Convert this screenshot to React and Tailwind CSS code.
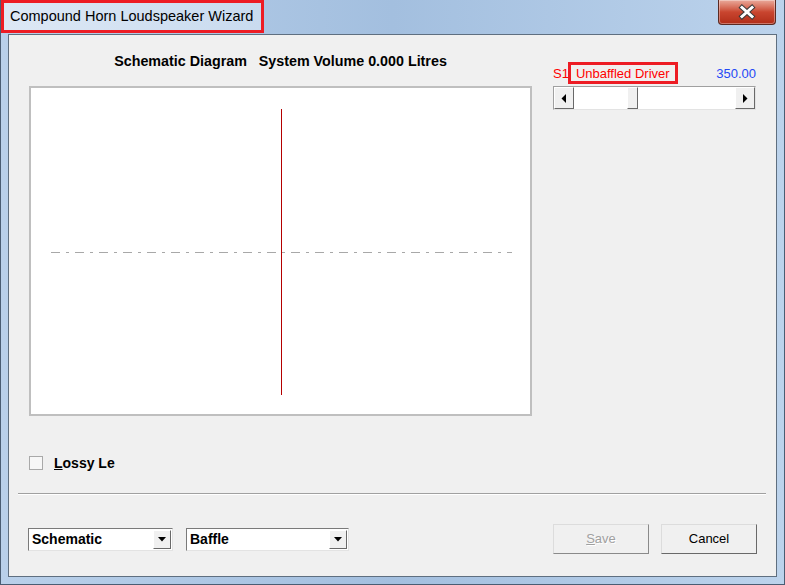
import React from "react"

function CloseButton() {
  return (
    <div className="mr-[8px] flex h-[25px] w-[58px] items-center justify-center rounded-b-[4px] border border-t-0 border-[#5b2a22] bg-gradient-to-b from-[#e9a99b] via-[#c9452f] to-[#b12d18] shadow-[inset_0_0_0_1px_rgba(255,255,255,0.35)]">
      <svg width="22" height="16" viewBox="0 0 22 16">
        <path d="M6 3.5 L16 12.5 M16 3.5 L6 12.5" stroke="#3b3b3b" strokeWidth="5" strokeLinecap="square" />
        <path d="M6 3.5 L16 12.5 M16 3.5 L6 12.5" stroke="#ffffff" strokeWidth="3" strokeLinecap="square" />
      </svg>
    </div>
  )
}

function Diagram() {
  return (
    <svg width="499" height="326" className="block">
      <line x1="20" y1="164.5" x2="481" y2="164.5" stroke="#a8a8a8" strokeWidth="1" strokeDasharray="9 6 3 6" />
      <line x1="250.5" y1="21" x2="250.5" y2="307" stroke="#b40000" strokeWidth="1" />
    </svg>
  )
}

function ScrollArrow({ dir }) {
  return (
    <div className="flex h-full w-[20px] items-center justify-center border border-white border-b-[#696969] border-r-[#696969] bg-[#f0f0f0]">
      <svg width="6" height="9" viewBox="0 0 6 9">
        {dir === "left" ? <path d="M5 0 L5 9 L0.5 4.5 Z" fill="#000" /> : <path d="M1 0 L1 9 L5.5 4.5 Z" fill="#000" />}
      </svg>
    </div>
  )
}

function Combo({ label, width }) {
  return (
    <div className={`flex h-[23px] ${width} items-center border border-[#7a7a7a] border-b-[#e3e3e3] border-r-[#e3e3e3] bg-white p-[1px]`}>
      <span className="flex-1 pl-[2px] text-[14px] font-bold leading-none text-black">{label}</span>
      <div className="flex h-[19px] w-[18px] items-center justify-center border border-white border-b-[#696969] border-r-[#696969] bg-[#f0f0f0]">
        <svg width="8" height="5" viewBox="0 0 8 5">
          <path d="M0 0 L8 0 L4 4.5 Z" fill="#000" />
        </svg>
      </div>
    </div>
  )
}

export default function App() {
  return (
    <div
      className="flex h-[585px] w-[785px] flex-col overflow-hidden border border-t-0 border-[#4a5d73] bg-gradient-to-r from-[#b9d0ea] via-[#a3bfdf] to-[#bcd3ec]"
      style={{ fontFamily: '"Liberation Sans", Arial, sans-serif' }}
    >
      {/* title bar */}
      <div className="flex h-[34px] shrink-0 items-start">
        <div className="flex h-[33px] w-[263px] items-center border-[3px] border-[#ed1c24] bg-gradient-to-r from-[#dde8f5] to-[#c9dbef] pl-[6px]">
          <span className="whitespace-nowrap text-[14.5px] leading-none text-black">Compound Horn Loudspeaker Wizard</span>
        </div>
        <div className="flex-1" />
        <CloseButton />
      </div>

      {/* client area */}
      <div className="mx-[7px] mb-[7px] flex flex-1 flex-col border border-[#5f6f80] bg-[#f0f0f0]">
        <div className="flex px-[20px] pt-[16px]">
          <div className="w-[503px]">
            <div className="h-[20px] whitespace-nowrap text-center text-[14.3px] font-bold leading-[20px] text-black">
              Schematic Diagram&nbsp;&nbsp;&nbsp;System Volume 0.000 Litres
            </div>
            <div className="mt-[15px] h-[330px] border-2 border-[#bfbfbf] bg-white">
              <Diagram />
            </div>
          </div>

          <div className="ml-[21px] mt-[11px] w-[203px]">
            <div className="flex h-[22px] items-center text-[13px] leading-none">
              <span className="text-[#ff0000]">S1</span>
              <span className="ml-[-1px] flex h-[22px] items-center border-[3px] border-[#ed1c24] px-[5px] text-[#ff0000]">
                Unbaffled Driver
              </span>
              <span className="flex-1" />
              <span className="text-[#2449f5]">350.00</span>
            </div>
            <div className="mt-[2px] flex h-[24px] border border-[#a0a0a0] border-b-[#e3e3e3] border-r-[#e3e3e3] bg-white">
              <ScrollArrow dir="left" />
              <div className="flex flex-1">
                <div className="w-[53px]" />
                <div className="h-full w-[11px] border border-white border-b-[#696969] border-r-[#696969] bg-[#f0f0f0]" />
              </div>
              <ScrollArrow dir="right" />
            </div>
          </div>
        </div>

        {/* checkbox */}
        <div className="mt-[39px] flex h-[15px] items-center px-[20px]">
          <div className="h-[14px] w-[14px] border border-[#a9a9a9] bg-[#f7f7f7]" />
          <span className="ml-[11px] text-[14px] font-bold leading-none text-black">
            <span className="underline">L</span>ossy Le
          </span>
        </div>

        {/* separator */}
        <div className="ml-[9px] mr-[10px] mt-[23px] h-[2px] border-t border-b border-t-[#a0a0a0] border-b-white" />

        {/* bottom row */}
        <div className="mt-[29px] flex h-[30px] items-center pl-[19px] pr-[19px]">
          <Combo label="Schematic" width="w-[145px]" />
          <div className="ml-[13px]">
            <Combo label="Baffle" width="w-[163px]" />
          </div>
          <div className="flex-1" />
          <button className="flex h-[30px] w-[96px] items-center justify-center border border-[#dcdcdc] border-b-[#8a8a8a] border-r-[#8a8a8a] bg-[#f0f0f0] text-[13px] text-[#a0a0a0] [text-shadow:1px_1px_0_#fff]">
            <span className="underline">S</span>ave
          </button>
          <button className="ml-[12px] flex h-[30px] w-[96px] items-center justify-center border border-[#dcdcdc] border-b-[#696969] border-r-[#696969] bg-[#f0f0f0] text-[13px] text-black">
            Cancel
          </button>
        </div>
      </div>
    </div>
  )
}
